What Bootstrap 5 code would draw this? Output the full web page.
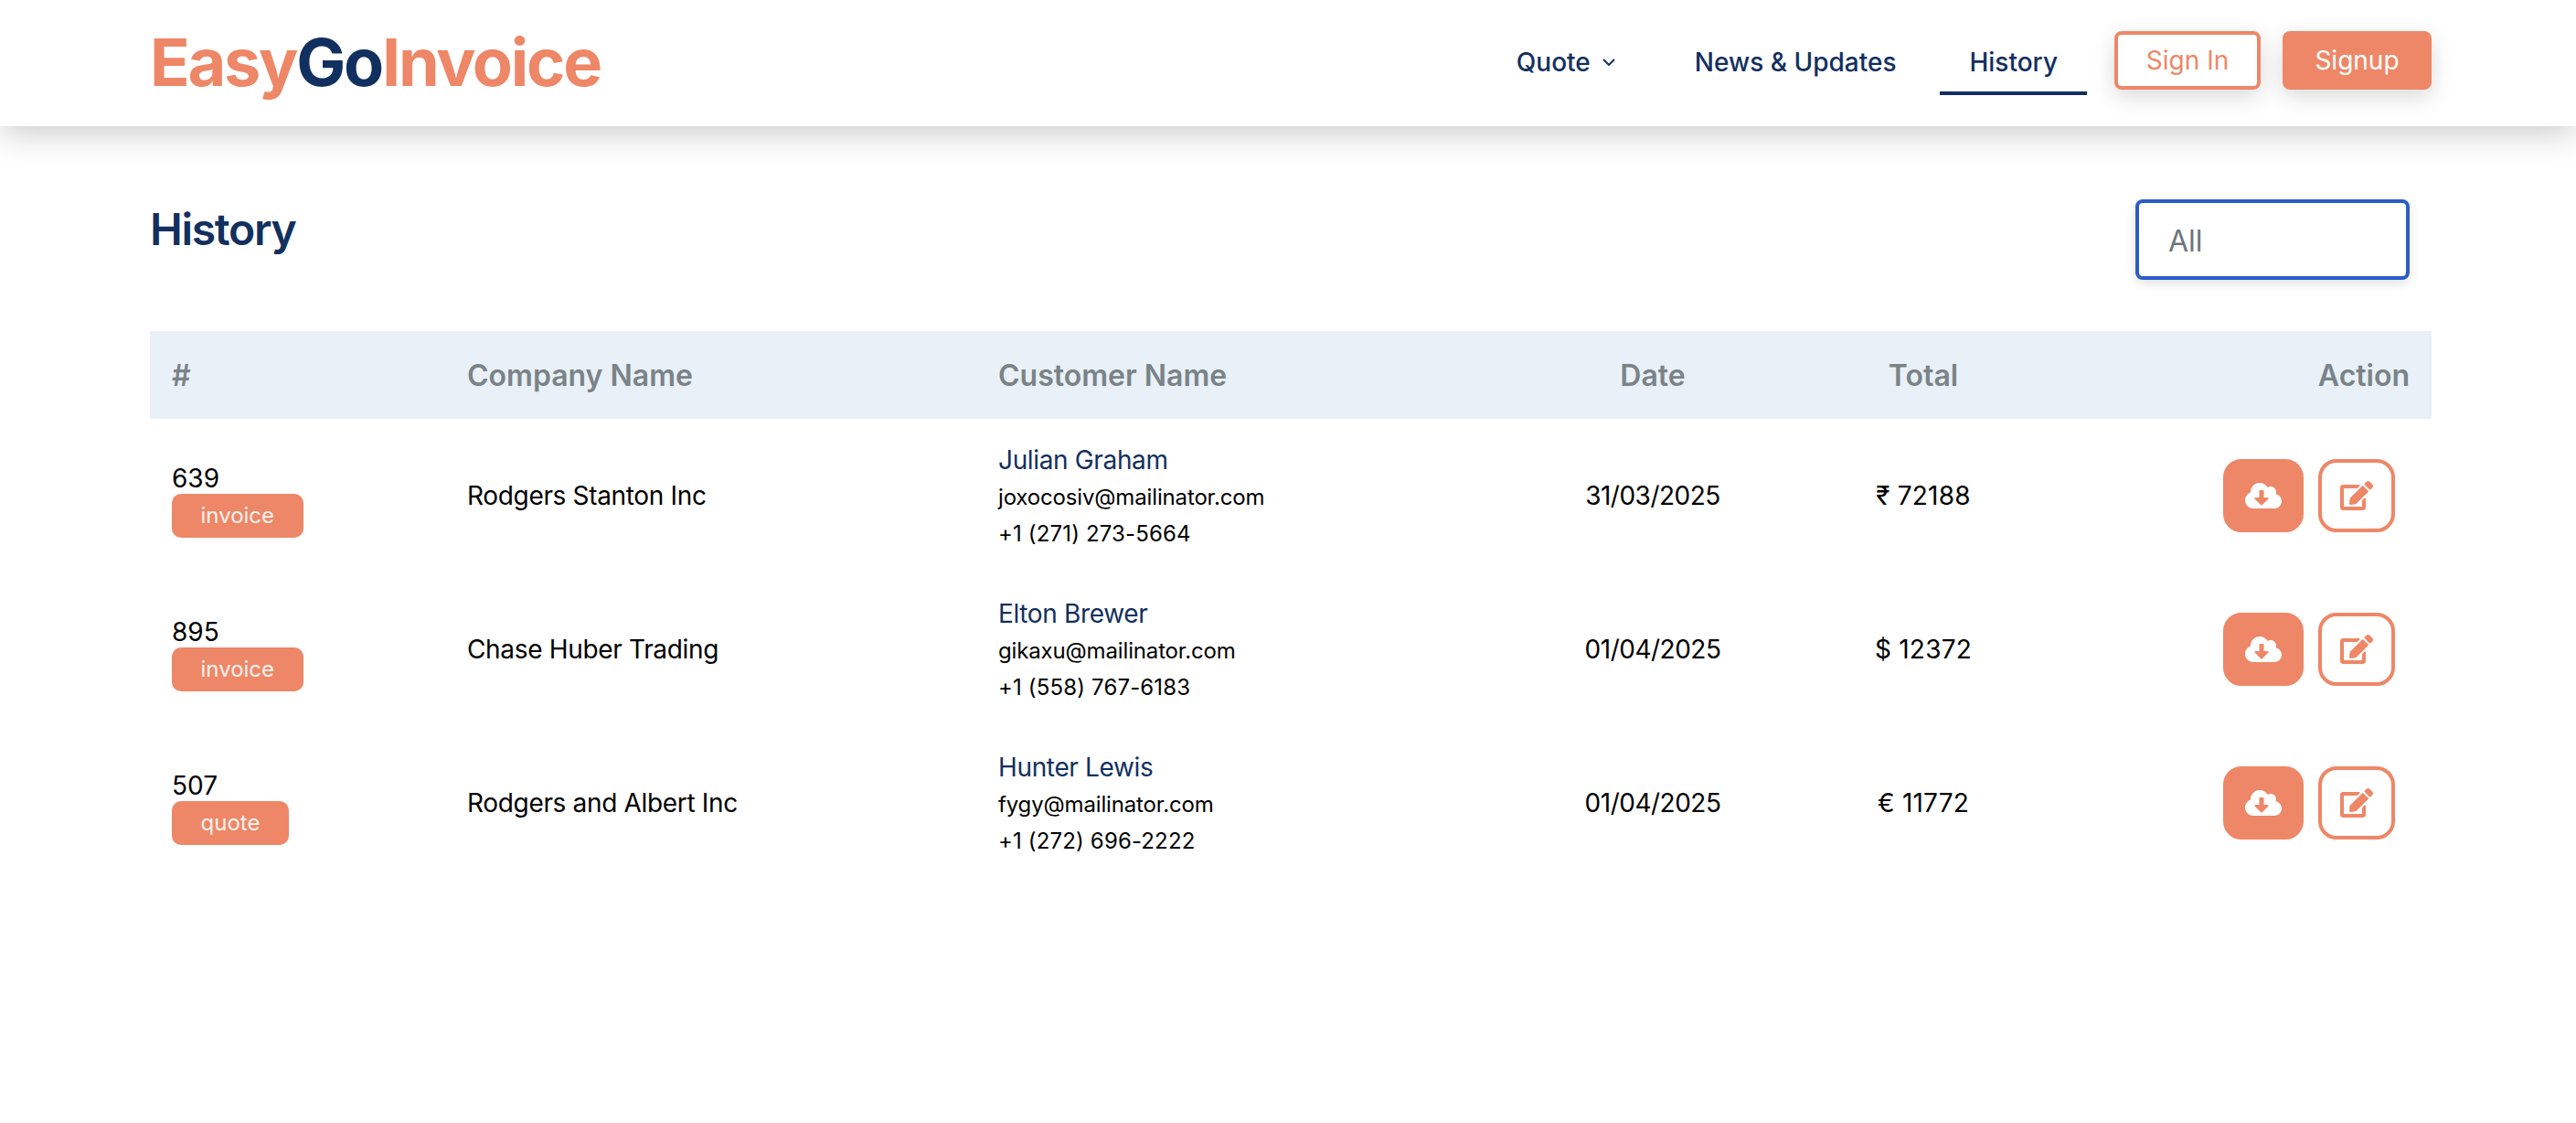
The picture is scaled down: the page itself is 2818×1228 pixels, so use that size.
<!DOCTYPE html>
<html lang="en">
<head>
    <meta charset="UTF-8">
    <meta name="viewport" content="width=device-width, initial-scale=1.0">
    <title>EasyGoInvoice - History</title>
    <link href="https://cdn.jsdelivr.net/npm/bootstrap@5.3.0/dist/css/bootstrap.min.css" rel="stylesheet">
    <style>
        /* page was captured at 2x, so double the rem base */
        html { font-size: 32px; }
        body {
            font-family: "Inter", "Liberation Sans", sans-serif;
            color: #000;
            background: #fff;
        }
        .page-wrap { padding-left: 164px; padding-right: 158px; }
        .top-bar { height: 138px; padding: 0; box-shadow: 0 8px 34px rgba(0, 0, 0, .2); }
        .brand-logo {
            font-size: 72px;
            font-weight: 700;
            line-height: 1;
            letter-spacing: -2.25px;
            color: #ee8767;
            padding: 0 0 3px;
            margin: 0;
        }
        .brand-logo:hover { color: #ee8767; }
        .brand-logo span { color: #12305f; }
        .top-links { margin-bottom: 2px; }
        .top-link {
            display: block;
            color: #12305f;
            font-size: 28px;
            font-weight: 500;
            line-height: 42px;
            padding: 15px 32px 11px;
            border-bottom: 4px solid transparent;
            text-decoration: none;
        }
        .top-link:hover { color: #12305f; }
        .top-link.current { border-bottom-color: #12305f; }
        .top-link svg { width: 14px; height: 8px; margin-left: 13px; margin-right: 7px; vertical-align: 6px; }
        .coral-btn {
            font-size: 28px;
            line-height: 56px;
            height: 64px;
            border: 4px solid #ee8767;
            border-radius: 8px;
            padding: 0;
            margin-bottom: 6px;
            color: #fff;
            background: #ee8767;
            box-shadow: 0 8px 24px rgba(0, 0, 0, .15);
        }
        .coral-btn.hollow { color: #ee8767; background: #fff; }
        .sign-in { width: 160px; margin-left: 30px; }
        .sign-up { width: 163px; margin-left: 24px; }
        .page-title {
            font-size: 48px;
            font-weight: 600;
            line-height: 58px;
            letter-spacing: -1.3px;
            color: #12305f;
            margin: 4px 0 0;
        }
        .page-head { margin-top: 80px; margin-bottom: 56px; }
        .type-filter {
            width: 300px;
            height: 88px;
            font-size: 32px;
            line-height: 48px;
            color: #6c757d;
            padding: 18px 32px 14px;
            border: 4px solid #2a5dc6;
            border-radius: 8px;
            background-image: none;
            margin-right: 24px;
            box-shadow: 0 4px 12px rgba(0, 0, 0, .12);
        }
        .history-table { table-layout: fixed; width: 2496px; margin: 0; }
        .history-table th {
            background: #e9f0f7;
            color: #7a8388;
            font-size: 32px;
            font-weight: 600;
            line-height: 48px;
            padding: 25px 24px 23px;
        }
        .history-table td {
            font-size: 28px;
            line-height: 42px;
            padding: 22px 24px;
            height: 168px;
            color: #000;
        }
        .w-num { width: 323px; }
        .w-company { width: 581px; }
        .w-customer { width: 612px; }
        .w-date { width: 256px; }
        .w-total { width: 336px; }
        .w-action { width: 388px; }
        .history-table td.cell-num { padding-top: 31px; }
        .history-table td.cell-customer { padding-top: 23px; padding-bottom: 21px; }
        .doc-no { line-height: 34px; }
        .doc-type {
            display: inline-block;
            background: #ee8767;
            color: #f7f1ee;
            font-size: 24px;
            line-height: 48px;
            height: 48px;
            padding: 0 31.5px;
            border-radius: 10px;
            vertical-align: top;
        }
        .cell-company { letter-spacing: -.33px; }
        .cell-date { letter-spacing: -.5px; }
        .cell-total { letter-spacing: .2px; }
        .cust-name { color: #12305f; line-height: 42px; letter-spacing: -.35px; }
        .cust-mail { font-size: 24px; line-height: 40px; letter-spacing: -.15px; }
        .cust-phone { font-size: 24px; line-height: 40px; letter-spacing: .15px; }
        .icon-btn {
            display: inline-flex;
            align-items: center;
            justify-content: center;
            height: 80px;
            padding: 0;
            border-radius: 20px;
            border: 4px solid #ee8767;
        }
        .icon-btn.fill { width: 88px; background: #ee8767; }
        .icon-btn.fill svg { width: 40px; height: 32px; fill: #fff; }
        .icon-btn.line { width: 84px; background: #fff; }
        .icon-btn.line svg { width: 36px; height: 32px; fill: #ee8767; }
        .action-box { padding-right: 16px; }
    </style>
</head>
<body>
    <nav class="navbar navbar-expand-lg bg-white top-bar">
        <div class="page-wrap d-flex w-100 align-items-center justify-content-between">
            <a class="navbar-brand brand-logo" href="#">Easy<span>Go</span>Invoice</a>
            <div class="d-flex align-items-center">
                <ul class="navbar-nav flex-row gap-2 top-links">
                    <li class="nav-item">
                        <a class="top-link" href="#">Quote<svg viewBox="0 0 14 8" fill="none" stroke="#12305f" stroke-width="2"><path d="M1 1l6 6 6-6"/></svg></a>
                    </li>
                    <li class="nav-item"><a class="top-link" href="#">News &amp; Updates</a></li>
                    <li class="nav-item"><a class="top-link current" href="#">History</a></li>
                </ul>
                <button type="button" class="btn coral-btn hollow sign-in">Sign In</button>
                <button type="button" class="btn coral-btn sign-up">Signup</button>
            </div>
        </div>
    </nav>

    <main class="page-wrap">
        <div class="d-flex justify-content-between align-items-start page-head">
            <h1 class="page-title">History</h1>
            <select class="form-select type-filter">
                <option>All</option>
                <option>Invoice</option>
                <option>Quote</option>
            </select>
        </div>

        <table class="table table-borderless align-middle history-table">
            <thead>
                <tr>
                    <th class="w-num">#</th>
                    <th class="w-company">Company Name</th>
                    <th class="w-customer">Customer Name</th>
                    <th class="w-date text-center">Date</th>
                    <th class="w-total text-center">Total</th>
                    <th class="w-action text-end">Action</th>
                </tr>
            </thead>
            <tbody id="rows"></tbody>
        </table>
    </main>

    <script src="https://cdn.jsdelivr.net/npm/bootstrap@5.3.0/dist/js/bootstrap.bundle.min.js"></script>
    <script>
        const cloudIcon = '<svg viewBox="0 0 640 512"><path d="M537.6 226.6c4.1-10.7 6.4-22.4 6.4-34.6 0-53-43-96-96-96-19.7 0-38.1 6-53.3 16.2C367 64.2 315.3 32 256 32c-88.4 0-160 71.6-160 160 0 2.7.1 5.4.2 8.1C40.2 219.8 0 273.2 0 336c0 79.5 64.5 144 144 144h368c70.7 0 128-57.3 128-128 0-61.9-44-113.6-102.4-125.4zm-132.9 88.7L299.3 420.7c-6.2 6.2-16.4 6.2-22.6 0L171.3 315.3c-10.1-10.1-2.9-27.3 11.3-27.3H248V176c0-8.8 7.2-16 16-16h48c8.8 0 16 7.2 16 16v112h65.4c14.2 0 21.4 17.2 11.3 27.3z"/></svg>';
        const editIcon = '<svg viewBox="0 0 576 512"><path d="M402.6 83.2l90.2 90.2c3.8 3.8 3.8 10 0 13.8L274.4 405.6l-92.8 10.3c-12.4 1.4-22.9-9.1-21.5-21.5l10.3-92.8L388.8 83.2c3.8-3.8 10-3.8 13.8 0zm162-22.9l-48.8-48.8c-15.2-15.2-39.9-15.2-55.2 0l-35.4 35.4c-3.8 3.8-3.8 10 0 13.8l90.2 90.2c3.8 3.8 10 3.8 13.8 0l35.4-35.4c15.2-15.3 15.2-40 0-55.2zM384 346.2V448H64V128h229.8c3.2 0 6.2-1.3 8.5-3.5l40-40c7.6-7.6 2.2-20.5-8.5-20.5H48C21.5 64 0 85.5 0 112v352c0 26.5 21.5 48 48 48h352c26.5 0 48-21.5 48-48V306.2c0-10.7-12.9-16-20.5-8.5l-40 40c-2.2 2.3-3.5 5.3-3.5 8.5z"/></svg>';

        const history = [
            { no: 639, type: 'invoice', company: 'Rodgers Stanton Inc', name: 'Julian Graham', email: 'joxocosiv@mailinator.com', phone: '+1 (271) 273-5664', date: '31/03/2025', total: '₹ 72188' },
            { no: 895, type: 'invoice', company: 'Chase Huber Trading', name: 'Elton Brewer', email: 'gikaxu@mailinator.com', phone: '+1 (558) 767-6183', date: '01/04/2025', total: '$ 12372' },
            { no: 507, type: 'quote', company: 'Rodgers and Albert Inc', name: 'Hunter Lewis', email: 'fygy@mailinator.com', phone: '+1 (272) 696-2222', date: '01/04/2025', total: '€ 11772' }
        ];

        document.getElementById('rows').innerHTML = history.map(r => `
            <tr>
                <td class="cell-num"><div class="doc-no">${r.no}</div><span class="doc-type">${r.type}</span></td>
                <td class="cell-company">${r.company}</td>
                <td class="cell-customer">
                    <div class="cust-name">${r.name}</div>
                    <div class="cust-mail">${r.email}</div>
                    <div class="cust-phone">${r.phone}</div>
                </td>
                <td class="text-center cell-date">${r.date}</td>
                <td class="text-center cell-total">${r.total}</td>
                <td class="text-end">
                    <div class="d-flex justify-content-end gap-2 action-box">
                        <button type="button" class="btn icon-btn fill">${cloudIcon}</button>
                        <button type="button" class="btn icon-btn line">${editIcon}</button>
                    </div>
                </td>
            </tr>`).join('');
    </script>
</body>
</html>
